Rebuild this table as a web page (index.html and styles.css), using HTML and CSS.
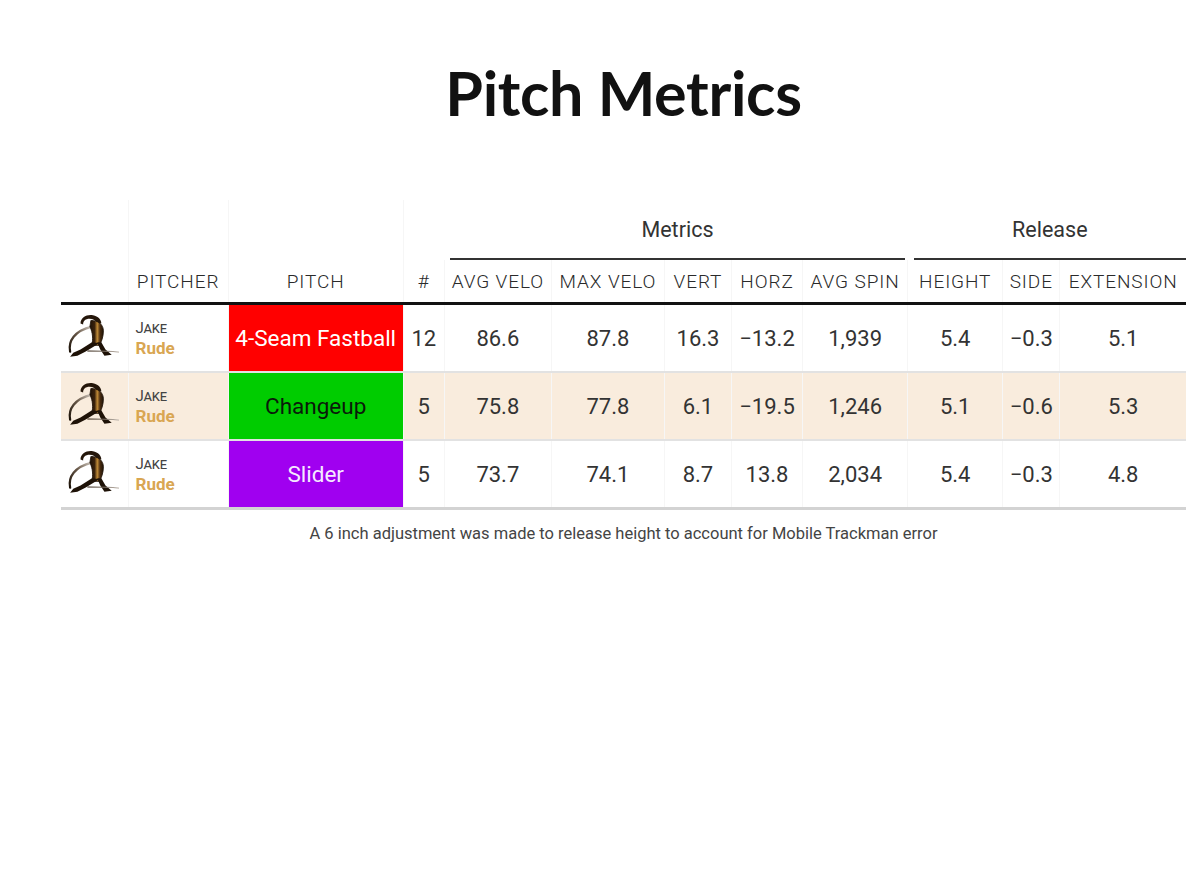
FILE: index.html
```html
<!DOCTYPE html>
<html>
<head>
<meta charset="utf-8">
<link rel="stylesheet" href="styles.css">
</head>
<body>
<svg width="0" height="0" class="defs">
  <defs>
    <linearGradient id="swoosh" x1="0" y1="1" x2="1" y2="0">
      <stop offset="0" stop-color="#1a1006"/>
      <stop offset="0.55" stop-color="#6a5a4a"/>
      <stop offset="1" stop-color="#d0c8c0"/>
    </linearGradient>
    <linearGradient id="line" x1="0" y1="0" x2="1" y2="0">
      <stop offset="0" stop-color="#2a1a0a"/>
      <stop offset="1" stop-color="#c8c0b8"/>
    </linearGradient>
    <linearGradient id="gold" x1="0" y1="0" x2="1" y2="0">
      <stop offset="0" stop-color="#1e1207"/>
      <stop offset="0.35" stop-color="#3a220c"/>
      <stop offset="0.55" stop-color="#c08a36"/>
      <stop offset="0.75" stop-color="#4a2c10"/>
      <stop offset="1" stop-color="#1e1207"/>
    </linearGradient>
    <symbol id="logo" viewBox="0 0 50 42">
      <path d="M3 36 C 1 26, 7 16, 24 12" fill="none" stroke="url(#swoosh)" stroke-width="2.2" stroke-linecap="round"/>
      <path d="M13 9 C 13 3, 19 0, 25 1 C 30 2, 33 5, 33 9 L 29 9 C 28 6, 25 4.5, 21.5 4.5 C 18 4.5, 15.5 6.5, 15.5 10 Z" fill="#24160a"/>
      <path d="M23 6 C 30 6, 35 10, 35 16 C 35 22, 33 27, 31 30 L 24 30 C 25 24, 25 18, 22 12 Z" fill="url(#gold)" stroke="#1e1207" stroke-width="0.8"/>
      <path d="M24 27 L 31 28 L 18 36 L 10 40 L 3 41 L 6 37 L 13 34 Z" fill="#1e1207"/>
      <path d="M29 27 L 33 27 L 37 34 L 43 39 L 36 40 L 32 34 Z" fill="#1e1207"/>
      <path d="M20 35.5 C 30 35.5, 40 35.5, 50 36.5" fill="none" stroke="url(#line)" stroke-width="1" stroke-linecap="round"/>
    </symbol>
  </defs>
</svg>
<div class="page">
  <h1 class="title">Pitch Metrics</h1>
  <table class="gt">
    <colgroup>
      <col class="c-logo"><col class="c-name"><col class="c-pitch"><col class="c-n">
      <col class="c-avgv"><col class="c-maxv"><col class="c-vert"><col class="c-horz"><col class="c-spin">
      <col class="c-hgt"><col class="c-side"><col class="c-ext">
    </colgroup>
    <thead>
      <tr class="spanners">
        <th></th><th></th><th></th><th></th>
        <th colspan="5" class="span-metrics"><div class="spanner">Metrics</div></th>
        <th colspan="3" class="span-release"><div class="spanner">Release</div></th>
      </tr>
      <tr class="labels">
        <th></th>
        <th>PITCHER</th>
        <th>PITCH</th>
        <th>#</th>
        <th>AVG VELO</th>
        <th>MAX VELO</th>
        <th>VERT</th>
        <th>HORZ</th>
        <th>AVG SPIN</th>
        <th>HEIGHT</th>
        <th>SIDE</th>
        <th>EXTENSION</th>
      </tr>
    </thead>
    <tbody>
      <tr>
        <td class="logo"><svg class="logo-svg"><use href="#logo"/></svg></td>
        <td class="name"><div class="first">Jake</div><div class="last">Rude</div></td>
        <td class="pitch fastball">4-Seam Fastball</td>
        <td>12</td>
        <td>86.6</td><td>87.8</td><td>16.3</td><td>&minus;13.2</td><td>1,939</td>
        <td>5.4</td><td>&minus;0.3</td><td>5.1</td>
      </tr>
      <tr class="striped">
        <td class="logo"><svg class="logo-svg"><use href="#logo"/></svg></td>
        <td class="name"><div class="first">Jake</div><div class="last">Rude</div></td>
        <td class="pitch changeup">Changeup</td>
        <td>5</td>
        <td>75.8</td><td>77.8</td><td>6.1</td><td>&minus;19.5</td><td>1,246</td>
        <td>5.1</td><td>&minus;0.6</td><td>5.3</td>
      </tr>
      <tr>
        <td class="logo"><svg class="logo-svg"><use href="#logo"/></svg></td>
        <td class="name"><div class="first">Jake</div><div class="last">Rude</div></td>
        <td class="pitch slider">Slider</td>
        <td>5</td>
        <td>73.7</td><td>74.1</td><td>8.7</td><td>13.8</td><td>2,034</td>
        <td>5.4</td><td>&minus;0.3</td><td>4.8</td>
      </tr>
    </tbody>
  </table>
  <p class="note">A 6 inch adjustment was made to release height to account for Mobile Trackman error</p>
</div>
</body>
</html>
```

FILE: styles.css
```css
html, body {
  margin: 0;
  padding: 0;
  background: #ffffff;
}
.defs {
  position: absolute;
  width: 0;
  height: 0;
}
.page {
  width: 1125px;
  margin-left: 61px;
  padding-top: 52px;
}
.title {
  margin: 0;
  text-align: center;
  font-family: Lato, "Noto Sans", sans-serif;
  font-weight: 700;
  font-size: 61px;
  line-height: 82px;
  color: #111;
  height: 148px;
  letter-spacing: -0.3px;
}
.gt {
  width: 1125px;
  border-collapse: collapse;
  table-layout: fixed;
  font-family: Roboto, "Noto Sans", sans-serif;
  color: #333;
}
.c-logo { width: 67px; }
.c-name { width: 100px; }
.c-pitch { width: 175px; }
.c-n { width: 41px; }
.c-avgv { width: 107px; }
.c-maxv { width: 113px; }
.c-vert { width: 67px; }
.c-horz { width: 71px; }
.c-spin { width: 105px; }
.c-hgt { width: 95px; }
.c-side { width: 57px; }
.c-ext { width: 126px; }

.gt th, .gt td {
  padding: 0;
  border-left: 1px solid #f6f6f6;
}
.gt th:first-child, .gt td:first-child {
  border-left: none;
}
.spanners th {
  height: 60px;
  vertical-align: bottom;
  font-weight: 400;
}
.spanners th.span-metrics, .spanners th.span-release {
  border-left: none;
}
.spanner {
  font-size: 21.5px;
  line-height: 24px;
  padding-bottom: 16px;
  border-bottom: 2px solid #333;
  color: #333;
  font-weight: 400;
}
.span-metrics .spanner {
  margin-left: 6px;
  margin-right: 3px;
}
.span-release .spanner {
  margin-left: 6px;
}
.labels th {
  height: 42px;
  font-size: 19px;
  font-weight: 300;
  color: #2a2a2a;
  letter-spacing: 0.9px;
  text-align: center;
  vertical-align: middle;
  border-bottom: 3px solid #111;
  white-space: nowrap;
}
.gt tbody td {
  height: 66px;
  text-align: center;
  vertical-align: middle;
  font-size: 22px;
  color: #333;
  border-bottom: 2px solid #e2e2e2;
}
.gt tbody tr:last-child td {
  border-bottom: 3px solid #d3d3d3;
}
.gt tbody tr.striped td {
  background: #f9ecdd;
}
.gt tbody td.logo {
  text-align: center;
}
.logo-svg {
  width: 52px;
  height: 44px;
  display: block;
  margin: 0 auto;
  position: relative;
  left: -1px;
  top: -2px;
}
.gt tbody td.name {
  text-align: left;
  padding-left: 7px;
  line-height: 20px;
}
.first {
  font-variant: small-caps;
  font-size: 15px;
  color: #444;
  letter-spacing: -0.2px;
}
.last {
  font-size: 17px;
  font-weight: 700;
  color: #d9a652;
}
.gt tbody td.pitch {
  font-size: 22.5px;
  white-space: nowrap;
}
.gt tbody td.fastball { background: #ff0000; color: #ffffff; }
.gt tbody tr td.changeup { background: #00cc00; color: #0a1a0a; }
.gt tbody td.slider { background: #a000f0; color: #f5eaff; }
.note {
  margin: 14px 0 0;
  text-align: center;
  font-family: Roboto, "Noto Sans", sans-serif;
  font-size: 16.5px;
  color: #444;
}
```
